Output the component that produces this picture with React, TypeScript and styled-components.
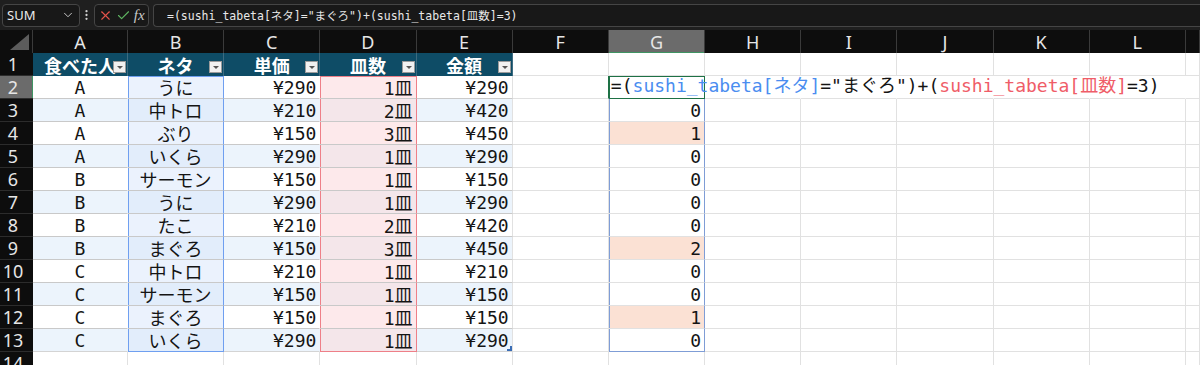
import React from 'react';
import styled, { createGlobalStyle } from 'styled-components';
import { Check, ChevronDown, EllipsisVertical, X } from 'lucide-react';

const GlobalStyle = createGlobalStyle`
  html, body {
    margin: 0;
    padding: 0;
    background: #ffffff;
  }
  #root {
    width: 1200px;
    height: 365px;
    overflow: hidden;
  }
`;

const MONO = `"DejaVu Sans Mono", "Noto Sans CJK JP", monospace`;
const GRID = '#e1e1e1';
const TABLE_LINE = '#c9c9c9';
const BLUE = '#6f9ff0';
const RED = '#ee7f88';
const SPILL = '#7f9dd6';
const SELECT = '#1e7145';

/* ---------- formula bar ---------- */

const SFormulaBar = styled.div`
    height: 30px;
    display: flex;
    align-items: center;
    padding-left: 2px;
    background: #1f1f1f;
    box-sizing: border-box;
`;

const SNameBox = styled.div`
    width: 78px;
    height: 23px;
    box-sizing: border-box;
    display: flex;
    align-items: center;
    justify-content: space-between;
    padding: 0 4px;
    border: 1px solid #454545;
    border-radius: 4px;
    background: #181818;
    color: #ececec;
    font: 13px 'Noto Sans', sans-serif;
`;

const SDots = styled.div`
    width: 13px;
    display: flex;
    justify-content: center;
    color: #d0d0d0;
`;

const SFnBox = styled.div`
    width: 55px;
    height: 23px;
    margin-left: 1px;
    box-sizing: border-box;
    display: flex;
    align-items: center;
    justify-content: space-around;
    padding: 0 2px;
    border: 1px solid #454545;
    border-radius: 4px;
    background: #181818;
`;

const SFx = styled.span`
    color: #c8c8c8;
    font: italic 15px 'Liberation Serif', serif;
`;

const SFormulaInput = styled.div`
    flex: 1;
    height: 23px;
    margin-left: 4px;
    box-sizing: border-box;
    display: flex;
    align-items: center;
    padding-left: 13px;
    border: 1px solid #454545;
    border-right: none;
    border-radius: 4px 0 0 4px;
    background: #181818;
    color: #e8e8e8;
    font-family: ${MONO};
    font-size: 11.5px;
    white-space: nowrap;
`;

/* ---------- sheet ---------- */

const SSheet = styled.div`
    display: grid;
    grid-template-columns: 33px 95px repeat(11, 96.18px) 1fr;
    grid-auto-rows: 23px;
`;

const SCorner = styled.div`
    position: relative;
    background: #0d0d0d;
    border-right: 1px solid #3a3a3a;

    &::after {
        content: '';
        position: absolute;
        right: 3px;
        bottom: 3px;
        width: 19px;
        height: 16px;
        background: #5c5c5c;
        clip-path: polygon(100% 0, 100% 100%, 0 100%);
    }
`;

const SColHead = styled.div<{ $active?: boolean }>`
    box-sizing: border-box;
    display: flex;
    align-items: center;
    justify-content: center;
    background: ${({ $active }) => ($active ? '#6b6b6b' : '#0d0d0d')};
    border-right: 1px solid #3a3a3a;
    box-shadow: ${({ $active }) => ($active ? 'inset 0 -1px 0 #3f9463' : 'none')};
    color: #e6e6e6;
    font: 18px 'Noto Sans', sans-serif;
`;

const SRowHead = styled.div<{ $active?: boolean }>`
    box-sizing: border-box;
    display: flex;
    align-items: center;
    justify-content: center;
    padding-right: 7px;
    background: ${({ $active }) => ($active ? '#6b6b6b' : '#0d0d0d')};
    border-bottom: 1px solid #2c2c2c;
    box-shadow: ${({ $active }) => ($active ? 'inset -1px 0 0 #3f9463' : 'none')};
    color: #e6e6e6;
    font: 18px 'Noto Sans', sans-serif;
`;

const STableHead = styled.div`
    position: relative;
    box-sizing: border-box;
    display: flex;
    align-items: center;
    justify-content: center;
    background: #0e4c66;
    border-right: 1px solid #3d6b80;
    color: #ffffff;
    font: 700 18px 'Noto Sans CJK JP', sans-serif;
    white-space: nowrap;
`;

const SFilter = styled.span`
    position: absolute;
    right: 1px;
    bottom: 3px;
    width: 13px;
    height: 12px;
    box-sizing: border-box;
    background: #f1f1f1;
    border: 1px solid #9b9b9b;

    &::after {
        content: '';
        position: absolute;
        left: 3px;
        top: 4px;
        border-left: 3px solid transparent;
        border-right: 3px solid transparent;
        border-top: 3px solid #555555;
    }
`;

type Align = 'left' | 'center' | 'right';

const SCell = styled.div<{
    $bg?: string;
    $align?: Align;
    $hline?: string;
    $vline?: string;
    $frame?: string;
}>`
    position: relative;
    box-sizing: border-box;
    display: flex;
    align-items: center;
    justify-content: ${({ $align }) =>
        $align === 'center' ? 'center' : $align === 'right' ? 'flex-end' : 'flex-start'};
    padding: ${({ $align }) => ($align === 'center' ? '0' : '0 3px 0 3px')};
    background: ${({ $bg }) => $bg ?? '#ffffff'};
    border-right: 1px solid ${({ $vline }) => $vline ?? GRID};
    border-bottom: 1px solid ${({ $hline }) => $hline ?? GRID};
    box-shadow: ${({ $frame }) => $frame ?? 'none'};
    color: #141414;
    font-family: ${MONO};
    font-size: 18px;
    white-space: nowrap;
    overflow: hidden;
`;

// the cell being edited: its formula runs on over the empty cells to the right
const SEditCell = styled(SCell)`
    && {
        z-index: 2;
        overflow: visible;
        align-items: flex-start;
        padding: 0 0 0 2px;
    }
`;

const SFormula = styled.span`
    display: block;
    line-height: 20px;
`;

const SResizeHandle = styled.span`
    position: absolute;
    right: 0;
    bottom: 0;
    width: 5px;
    height: 5px;
    box-sizing: border-box;
    border-right: 2px solid #3a6db5;
    border-bottom: 2px solid #3a6db5;
`;

const SRefNeta = styled.span`
    color: #4a8df0;
`;

const SRefSara = styled.span`
    color: #ef5d68;
`;

/* ---------- data ---------- */

const COLS = ['A', 'B', 'C', 'D', 'E', 'F', 'G', 'H', 'I', 'J', 'K', 'L'];
const HEADERS = ['食べた人', 'ネタ', '単価', '皿数', '金額'];

const ROWS: [string, string, number, number, number][] = [
    ['A', 'うに', 290, 1, 290],
    ['A', '中トロ', 210, 2, 420],
    ['A', 'ぶり', 150, 3, 450],
    ['A', 'いくら', 290, 1, 290],
    ['B', 'サーモン', 150, 1, 150],
    ['B', 'うに', 290, 1, 290],
    ['B', 'たこ', 210, 2, 420],
    ['B', 'まぐろ', 150, 3, 450],
    ['C', '中トロ', 210, 1, 210],
    ['C', 'サーモン', 150, 1, 150],
    ['C', 'まぐろ', 150, 1, 150],
    ['C', 'いくら', 290, 1, 290],
];

const RESULTS = [null, 0, 1, 0, 0, 0, 0, 2, 0, 0, 1, 0];

// left + optional top line of a range highlight; right/bottom come from the borders
const frame = (color: string, top: boolean) =>
    top ? `inset 1px 0 0 ${color}, inset 0 1px 0 ${color}` : `inset 1px 0 0 ${color}`;

const TAIL = ['H', 'I', 'J', 'K', 'L', 'M'];

export default function App() {
    const last = ROWS.length - 1;

    return (
        <>
            <GlobalStyle />
            <SFormulaBar>
                <SNameBox>
                    SUM
                    <ChevronDown size={14} color="#d0d0d0" strokeWidth={1.6} />
                </SNameBox>
                <SDots>
                    <EllipsisVertical size={14} strokeWidth={2.2} />
                </SDots>
                <SFnBox>
                    <X size={15} color="#e5534b" strokeWidth={1.8} />
                    <Check size={15} color="#5fb662" strokeWidth={1.8} />
                    <SFx>fx</SFx>
                </SFnBox>
                <SFormulaInput>=(sushi_tabeta[ネタ]="まぐろ")+(sushi_tabeta[皿数]=3)</SFormulaInput>
            </SFormulaBar>

            <SSheet>
                <SCorner />
                {COLS.map((c) => (
                    <SColHead key={c} $active={c === 'G'}>
                        {c}
                    </SColHead>
                ))}
                <SColHead />

                <SRowHead>1</SRowHead>
                {HEADERS.map((h) => (
                    <STableHead key={h}>
                        {h}
                        <SFilter />
                    </STableHead>
                ))}
                {['F', 'G', ...TAIL].map((c) => (
                    <SCell key={c} />
                ))}

                {ROWS.map(([who, neta, price, plates, total], i) => {
                    const band = i % 2 === 1;
                    const isLast = i === last;
                    const hline = isLast ? '#d4d4d4' : TABLE_LINE;
                    const result = RESULTS[i];
                    const isEdit = i === 0;
                    return (
                        <React.Fragment key={i}>
                            <SRowHead $active={isEdit}>{i + 2}</SRowHead>
                            <SCell
                                $align="center"
                                $bg={band ? '#ecf4fc' : '#ffffff'}
                                $hline={hline}
                                $vline="transparent"
                            >
                                {who}
                            </SCell>
                            <SCell
                                $align="center"
                                $bg={band ? '#e2edfb' : '#ebf2fd'}
                                $hline={isLast ? BLUE : hline}
                                $vline={BLUE}
                                $frame={frame(BLUE, i === 0)}
                            >
                                {neta}
                            </SCell>
                            <SCell
                                $align="right"
                                $bg={band ? '#ecf4fc' : '#ffffff'}
                                $hline={hline}
                                $vline="transparent"
                            >
                                ¥{price}
                            </SCell>
                            <SCell
                                $align="right"
                                $bg={band ? '#f4e6ea' : '#fde9eb'}
                                $hline={isLast ? RED : hline}
                                $vline={RED}
                                $frame={frame(RED, i === 0)}
                            >
                                {plates}皿
                            </SCell>
                            <SCell $align="right" $bg={band ? '#ecf4fc' : '#ffffff'} $hline={hline}>
                                ¥{total}
                                {isLast && <SResizeHandle />}
                            </SCell>
                            <SCell $vline={isEdit ? SELECT : GRID} />
                            {isEdit ? (
                                <SEditCell
                                    $vline={SELECT}
                                    $hline={SELECT}
                                    $frame={`inset 1px 1px 0 0 ${SELECT}`}
                                >
                                    <SFormula>
                                        =(<SRefNeta>sushi_tabeta[ネタ]</SRefNeta>="まぐろ")+(
                                        <SRefSara>sushi_tabeta[皿数]</SRefSara>=3)
                                    </SFormula>
                                </SEditCell>
                            ) : (
                                <SCell
                                    $align="right"
                                    $bg={result ? '#fbe1d4' : '#ffffff'}
                                    $vline={SPILL}
                                    $hline={isLast ? SPILL : GRID}
                                    $frame={frame(SPILL, false)}
                                >
                                    {result}
                                </SCell>
                            )}
                            {TAIL.map((c) => (
                                <SCell key={c} $vline={isEdit && c !== 'M' ? 'transparent' : GRID} />
                            ))}
                        </React.Fragment>
                    );
                })}

                <SRowHead>14</SRowHead>
                {[...COLS, 'M'].map((c) => (
                    <SCell key={c} />
                ))}
            </SSheet>
        </>
    );
}
